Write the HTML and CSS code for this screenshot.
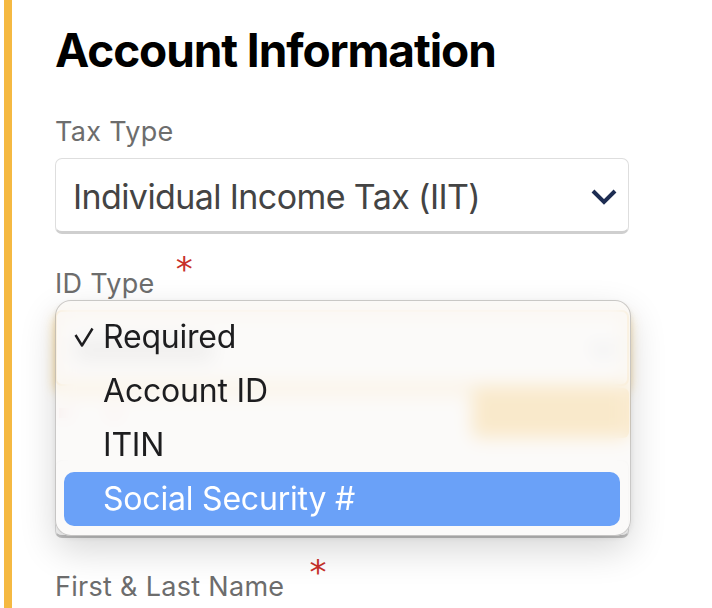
FILE: index.html
```html
<!DOCTYPE html>
<html lang="en">
<head>
<meta charset="utf-8">
<title>Account Information</title>
<link rel="stylesheet" href="styles.css">
</head>
<body>
<div class="page">
  <h1 class="title">Account Information</h1>

  <div class="field field-tax">
    <label class="label">Tax Type</label>
    <div class="select">
      <span class="select-value">Individual Income Tax (IIT)</span>
      <svg class="chev" width="26" height="16" viewBox="0 0 26 16"><polyline points="2,2 13,13 24,2" fill="none" stroke="#1d2d52" stroke-width="4"/></svg>
    </div>
  </div>

  <div class="field field-id">
    <label class="label">ID Type<span class="req">*</span></label>
    <div class="select-wrap">
      <div class="select select-focus">
        <span class="select-ghost"></span>
        <svg class="chev" width="26" height="16" viewBox="0 0 26 16"><polyline points="2,2 13,13 24,2" fill="none" stroke="#9aa3b5" stroke-width="4"/></svg>
      </div>
      <div class="hint">
        <span class="hint-err"></span>
        <span class="hint-badge"></span>
      </div>
      <div class="input"></div>

      <div class="menu">
        <div class="opt">
          <svg class="check" width="20" height="20" viewBox="0 0 20 20"><polyline points="1.5,8 8,18.5 18.5,1.5" fill="none" stroke="#1d1d1f" stroke-width="2.4" stroke-linejoin="round"/></svg>
          <span>Required</span>
        </div>
        <div class="opt"><span></span><span>Account ID</span></div>
        <div class="opt"><span></span><span>ITIN</span></div>
        <div class="opt active"><span></span><span>Social Security #</span></div>
      </div>
    </div>
  </div>

  <div class="field field-name">
    <label class="label">First &amp; Last Name<span class="req req-name">*</span></label>
  </div>
</div>
</body>
</html>
```

FILE: styles.css
```css
html, body {
  margin: 0;
  background: #ffffff;
}

body {
  font-family: Inter, "Noto Sans", sans-serif;
}

.page {
  position: relative;
  margin-left: 4px;
  border-left: 8px solid #f5b942;
  padding: 22px 0 0 43px;
  height: 608px;
  box-sizing: border-box;
  overflow: hidden;
}

.title {
  margin: 0;
  font-size: 46px;
  line-height: 56px;
  font-weight: 700;
  color: #000;
  letter-spacing: -1.1px;
}

.field-tax {
  margin-top: 38px;
}

.field-id {
  margin-top: 34px;
}

.field-name {
  margin-top: 33px;
}

.label {
  display: block;
  font-size: 27px;
  line-height: 32px;
  color: #6d6d6d;
  letter-spacing: 0.3px;
  margin-bottom: 10px;
}

.req {
  color: #c8302a;
  font-family: "DejaVu Sans", sans-serif;
  font-size: 34px;
  margin-left: 21px;
  vertical-align: 12px;
  line-height: 0;
}

.req-name {
  margin-left: 25px;
}

.select {
  width: 574px;
  height: 76px;
  box-sizing: border-box;
  border: 1px solid #dedede;
  border-bottom: 3px solid #cfcfcf;
  border-radius: 7px;
  display: flex;
  align-items: center;
  justify-content: space-between;
  padding: 4px 11px 0 17px;
  background: #fff;
}

.select-value {
  font-size: 34px;
  line-height: 44px;
  color: #444;
  letter-spacing: -0.6px;
}

.select-wrap {
  position: relative;
  width: 574px;
}

.select-focus {
  border: 2px solid #f0ac2e;
  box-shadow: 0 6px 12px rgba(246, 185, 60, 0.55);
}

.select-ghost {
  width: 140px;
  height: 24px;
  border-radius: 8px;
  background: #cfcfcf;
}

.hint {
  display: flex;
  justify-content: space-between;
  align-items: center;
  height: 54px;
}

.hint-err {
  width: 60px;
  height: 10px;
  margin-left: 4px;
  background: linear-gradient(90deg, #f3c4c4 0 10px, transparent 10px 50px, #f3c4c4 50px 60px);
}

.hint-badge {
  width: 157px;
  height: 50px;
  border-radius: 6px;
  background: #f7b22e;
}

.input {
  margin-top: 20px;
  width: 574px;
  height: 78px;
  box-sizing: border-box;
  border: 1px solid #dedede;
  border-bottom: 3px solid #c4c4c4;
  border-radius: 7px;
}

.menu {
  position: absolute;
  top: -10px;
  left: 0;
  width: 576px;
  box-sizing: border-box;
  padding: 9px 10px 9px 8px;
  border: 1px solid rgba(0, 0, 0, 0.2);
  border-radius: 16px;
  background: rgba(250, 249, 247, 0.78);
  backdrop-filter: blur(9px);
  box-shadow: 0 14px 36px rgba(0, 0, 0, 0.16), 0 2px 6px rgba(0, 0, 0, 0.08);
}

.opt {
  display: grid;
  grid-template-columns: 39px auto;
  align-items: center;
  height: 54px;
  line-height: 54px;
  font-size: 32px;
  letter-spacing: -0.2px;
  color: #1d1d1f;
  border-radius: 10px;
}

.check {
  justify-self: center;
}

.opt.active {
  background: #6aa1f8;
  color: #ffffff;
}
```
